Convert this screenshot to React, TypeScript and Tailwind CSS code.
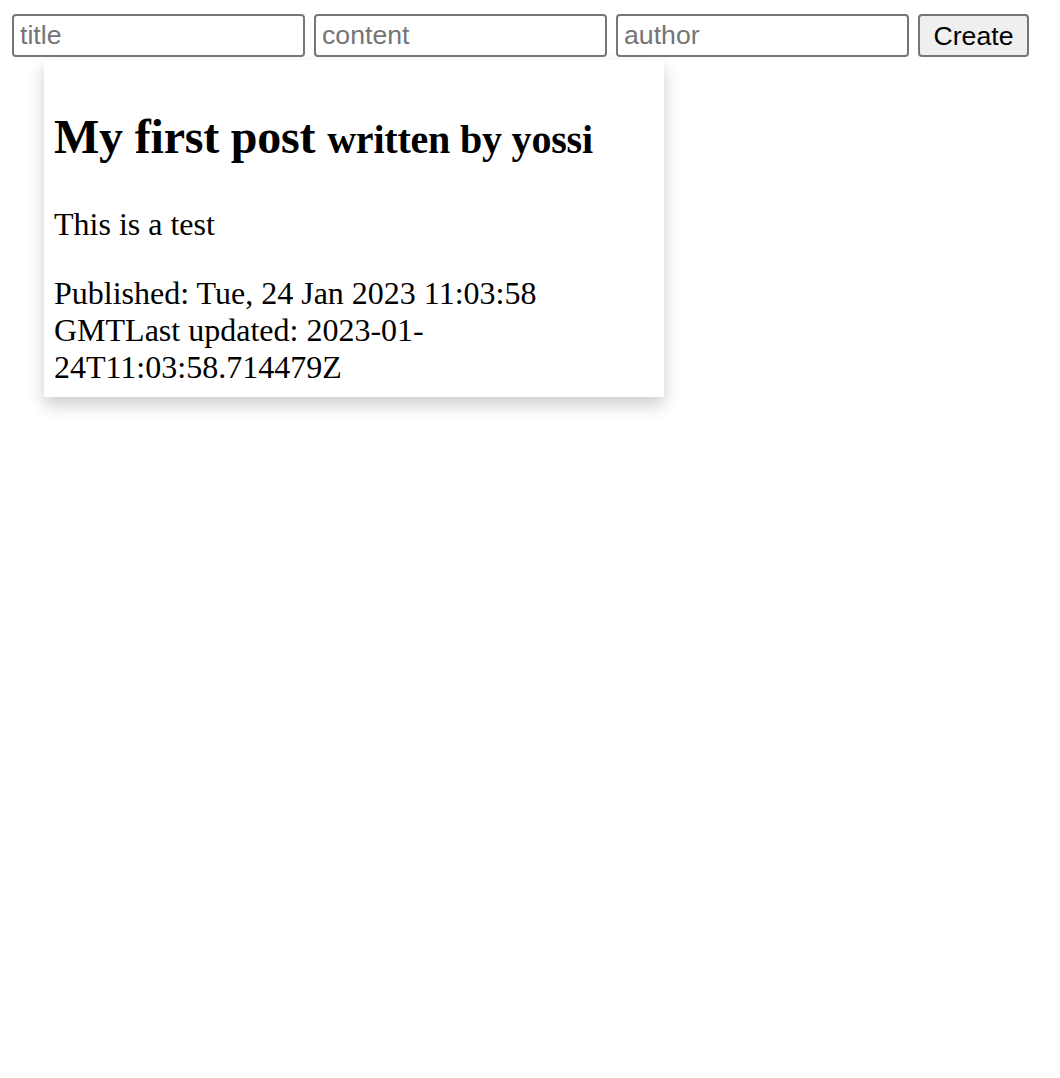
import React from "react";

const inputCls =
  "w-[293px] h-[43px] pl-[6px] pr-[4px] border-2 border-[#767676] rounded-[4px] bg-white text-[26.67px] text-black placeholder:text-[#757575] outline-none font-['Liberation_Sans',Arial,sans-serif]";

const published = "Tue, 24 Jan 2023 11:03:58 GMT";
const updated = "2023-01-24T11:03:58.714479Z";

export default function App() {
  return (
    <div className="min-h-screen bg-white text-black font-['Liberation_Serif','Times_New_Roman',serif]">
      {/* create form */}
      <div className="flex items-start gap-[9px] pl-[12px] pt-[14px]">
        <input className={inputCls} placeholder="title" />
        <input className={inputCls} placeholder="content" />
        <input className={inputCls} placeholder="author" />
        <button className="w-[111px] h-[43px] border-2 border-[#767676] rounded-[4px] bg-[#efefef] text-[26.67px] text-black font-['Liberation_Sans',Arial,sans-serif]">
          Create
        </button>
      </div>

      {/* post card */}
      <div className="mt-[3px] ml-[44px] w-[620px] bg-white px-[10px] pt-[49px] pb-[11px] shadow-[0_8px_16px_0_rgba(0,0,0,0.2)]">
        <h1 className="text-[48px] leading-[55px] font-bold mb-[39px] tracking-[-0.2px]">
          My first post <small className="text-[40px] font-bold">written by yossi</small>
        </h1>
        <p className="text-[32px] leading-[37px] mb-[32px]">This is a test</p>
        <p className="text-[32px] leading-[37px]">
          {"Published: " + published + "Last updated: " + updated}
        </p>
      </div>
    </div>
  );
}
